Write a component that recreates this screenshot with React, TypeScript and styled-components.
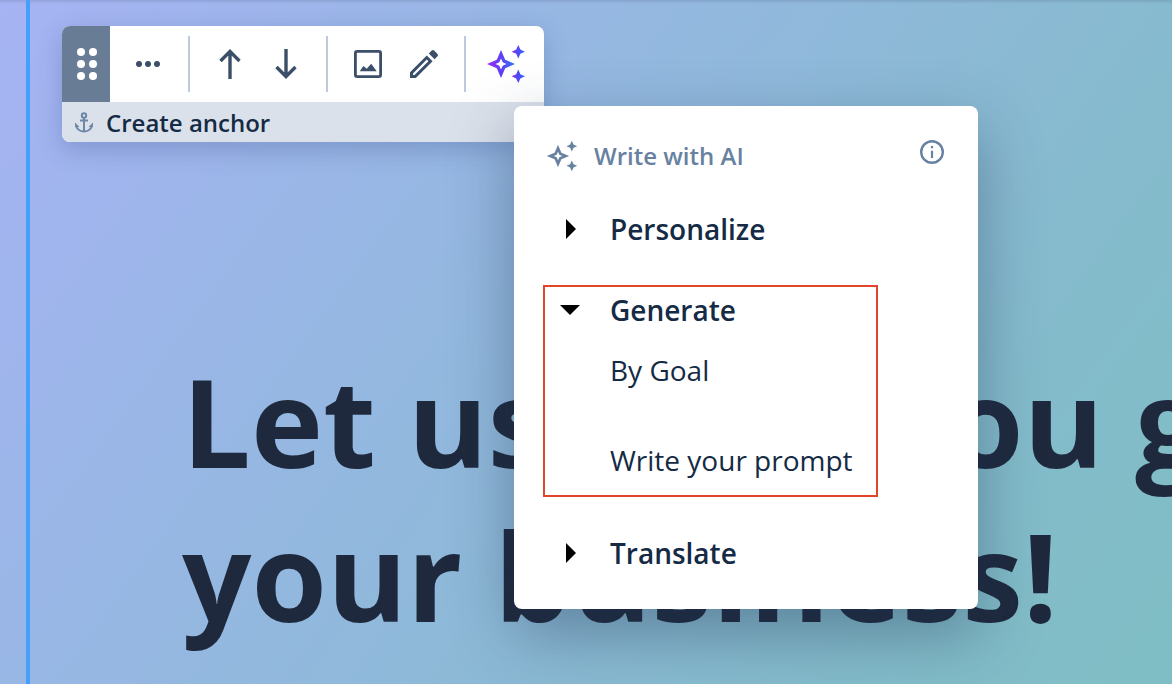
import React from "react";
import styled, { createGlobalStyle } from "styled-components";

const GlobalStyle = createGlobalStyle`
  *, *::before, *::after { box-sizing: border-box; }
  html, body, #root { margin: 0; min-height: 100vh; }
  body {
    font-family: "Open Sans", "Noto Sans", sans-serif;
    color: #152b45;
  }
  button {
    font: inherit;
    color: inherit;
    border: 0;
    padding: 0;
    background: none;
    cursor: pointer;
  }
  svg { display: block; }
`;

const Page = styled.main`
  position: relative;
  min-height: 100vh;
  overflow: hidden;
  background:
    linear-gradient(rgba(20, 30, 60, 0.12), rgba(20, 30, 60, 0)) top / 100% 4px no-repeat,
    linear-gradient(126deg, #a6b3f4 0%, #93b8df 42%, #84bbcb 78%, #7fbec4 100%);
`;

const Block = styled.section`
  min-height: 100vh;
  margin-left: 26px;
  padding: 344px 0 0 152px;
  border-left: 4px solid #45a0fb;
`;

const Title = styled.h1`
  margin: 0;
  font-size: 122px;
  line-height: 154px;
  font-weight: 700;
  color: #1e293d;
  white-space: nowrap;
`;

const Toolbar = styled.div`
  position: absolute;
  top: 26px;
  left: 62px;
  border-radius: 8px;
  background: #fff;
  box-shadow: 0 8px 24px rgba(40, 60, 120, 0.25);
`;

const Clip = styled.div`
  border-radius: 8px;
  overflow: hidden;
`;

const Tools = styled.div`
  display: flex;
  align-items: center;
  height: 76px;
`;

const Handle = styled.button`
  display: grid;
  place-items: center;
  width: 48px;
  height: 76px;
  background: #687d95;
  cursor: grab;
`;

const Group = styled.div<{ $pad?: string }>`
  display: flex;
  padding: ${(p) => p.$pad ?? "0 12px"};
  & + & { border-left: 2px solid #bccadb; }
`;

const Tool = styled.button`
  display: grid;
  place-items: center;
  width: 56px;
  height: 56px;
  color: #3b4f69;
`;

const AnchorButton = styled.button`
  display: flex;
  align-items: center;
  gap: 12px;
  width: 100%;
  height: 40px;
  padding: 2px 12px 0;
  background: #dbe1ea;
  font-size: 24px;
  line-height: 38px;
  font-weight: 600;
`;

const AnchorIcon = styled.svg`
  color: #6d87a5;
`;

const Menu = styled.div`
  position: absolute;
  top: 106px;
  left: 514px;
  display: flex;
  flex-direction: column;
  align-items: flex-start;
  gap: 31px;
  width: 464px;
  padding: 26px 29px 31px;
  border-radius: 8px;
  background: #fff;
  box-shadow: 0 24px 64px rgba(30, 50, 80, 0.4);
`;

const MenuHeader = styled.header`
  display: flex;
  align-items: center;
  gap: 16px;
  align-self: stretch;
  height: 48px;
  padding: 0 5px 0 3px;
  margin-bottom: -7px;
  color: #6881a0;
`;

const MenuTitle = styled.h2`
  flex: 1;
  margin: 0;
  font-size: 24px;
  line-height: 48px;
  font-weight: 600;
`;

const InfoButton = styled.button`
  align-self: flex-start;
  padding-top: 8px;
`;

const Section = styled.section<{ $marked?: boolean }>`
  padding: 0 23px 0 15px;
  border: 2px solid ${(p) => (p.$marked ? "#e2462a" : "transparent")};
`;

const SectionToggle = styled.button`
  display: flex;
  align-items: center;
  gap: 30px;
  height: 46px;
  font-size: 28px;
  line-height: 46px;
  font-weight: 600;
`;

const Options = styled.ul`
  display: flex;
  flex-direction: column;
  gap: 46px;
  margin: 0;
  padding: 15px 0 13px 50px;
  list-style: none;
`;

const Option = styled.button`
  display: block;
  height: 44px;
  font-size: 28px;
  line-height: 44px;
`;

const MAIN_STAR =
  "M15 6 L19.2 15.8 L29 20 L19.2 24.2 L15 34 L10.8 24.2 L1 20 L10.8 15.8 Z M15 14.6 L13.3 18.3 L9.6 20 L13.3 21.7 L15 25.4 L16.7 21.7 L20.4 20 L16.7 18.3 Z";
const SMALL_STARS =
  "M32.3 1 L34.4 5.6 L39 7.7 L34.4 9.8 L32.3 14.4 L30.2 9.8 L25.6 7.7 L30.2 5.6 Z M32.3 25.6 L34.4 30.2 L39 32.3 L34.4 34.4 L32.3 39 L30.2 34.4 L25.6 32.3 L30.2 30.2 Z";

function Sparkles({ size, colorful }: { size: number; colorful?: boolean }) {
  return (
    <svg width={size} height={size} viewBox="0 0 40 40" aria-hidden="true">
      {colorful && (
        <defs>
          <linearGradient id="spark" gradientUnits="userSpaceOnUse" x1="1" y1="20" x2="29" y2="18">
            <stop offset="0" stopColor="#a02cf0" />
            <stop offset="0.5" stopColor="#6040f5" />
            <stop offset="1" stopColor="#2f72ff" />
          </linearGradient>
          <linearGradient id="spark-small" gradientUnits="userSpaceOnUse" x1="25" y1="20" x2="39" y2="20">
            <stop offset="0" stopColor="#8a35f0" />
            <stop offset="0.5" stopColor="#5048f8" />
            <stop offset="1" stopColor="#2f72ff" />
          </linearGradient>
        </defs>
      )}
      <path fill={colorful ? "url(#spark)" : "currentColor"} fillRule="evenodd" d={MAIN_STAR} />
      <path fill={colorful ? "url(#spark-small)" : "currentColor"} d={SMALL_STARS} />
    </svg>
  );
}

function Caret({ open }: { open?: boolean }) {
  return (
    <svg width="20" height="20" viewBox="0 0 20 20" aria-hidden="true">
      <path fill="#000" d={open ? "M0 5H20L10 15Z" : "M6 0L16 10L6 20Z"} />
    </svg>
  );
}

const stroke = { fill: "none", stroke: "currentColor", strokeWidth: 3.4 };

export default function App() {
  return (
    <>
      <GlobalStyle />
      <Page>
        <Block>
          <Title>
            Let us help you grow
            <br />
            your business!
          </Title>
        </Block>

        <Toolbar role="toolbar" aria-label="Block tools">
          <Clip>
            <Tools>
              <Handle aria-label="Drag block">
                <svg width="24" height="32" viewBox="0 0 24 32" fill="#fff">
                  {[4, 16, 28].map((y) => (
                    <React.Fragment key={y}>
                      <circle cx="7" cy={y} r="4" />
                      <circle cx="19" cy={y} r="4" />
                    </React.Fragment>
                  ))}
                </svg>
              </Handle>
              <Group $pad="0 12px 0 10px">
                <Tool aria-label="More">
                  <svg width="24" height="24" viewBox="0 0 24 24" fill="currentColor">
                    <circle cx="3" cy="12" r="3" />
                    <circle cx="12" cy="12" r="3" />
                    <circle cx="21" cy="12" r="3" />
                  </svg>
                </Tool>
              </Group>
              <Group>
                <Tool aria-label="Move up">
                  <svg width="32" height="32" viewBox="0 0 32 32" {...stroke}>
                    <path d="M16 31V4M6.5 13L16 3.5L25.5 13" />
                  </svg>
                </Tool>
                <Tool aria-label="Move down">
                  <svg width="32" height="32" viewBox="0 0 32 32" {...stroke}>
                    <path d="M16 1V28M6.5 19L16 28.5L25.5 19" />
                  </svg>
                </Tool>
              </Group>
              <Group>
                <Tool aria-label="Image">
                  <svg width="32" height="32" viewBox="0 0 32 32">
                    <rect x="3.4" y="3.4" width="25.2" height="25.2" rx="1.8" {...stroke} strokeWidth={2.8} />
                    <path fill="currentColor" d="M7.7 23.2L11.5 18L14.7 20.8L19.200 15.800L24.700 23.200Z" />
                  </svg>
                </Tool>
                <Tool aria-label="Edit">
                  <svg width="32" height="32" viewBox="0 0 32 32">
                    <path
                      fill="currentColor"
                      fillRule="evenodd"
                      d="M2 24.200L18.800 7.400L24.600 13.200L7.800 30H2ZM5 25.500V27H6.500L20.400 13.200L18.800 11.600ZM20.800 5.400L23.700 2.500Q24.900 1.400 26.100 2.500L29.500 5.900Q30.600 7.100 29.500 8.300L26.600 11.200Z"
                    />
                  </svg>
                </Tool>
              </Group>
              <Group $pad="0 10px 0 12px">
                <Tool aria-label="Write with AI">
                  <Sparkles size={40} colorful />
                </Tool>
              </Group>
            </Tools>
            <AnchorButton>
              <AnchorIcon width="20" height="22" viewBox="0 0 20 22" fill="none" stroke="currentColor" strokeWidth="2" aria-hidden="true">
                <circle cx="10" cy="3.500" r="2.200" />
                <path d="M10 5.700V19.500M6 8.500H14M2 13C2.500 17 5.500 19.300 10 19.500C14.500 19.300 17.500 17 18 13" />
                <path fill="currentColor" stroke="none" d="M1 10.500L5.500 15H1ZM19 10.500L14.500 15H19Z" />
              </AnchorIcon>
              Create anchor
            </AnchorButton>
          </Clip>
        </Toolbar>

        <Menu>
          <MenuHeader>
            <Sparkles size={32} />
            <MenuTitle>Write with AI</MenuTitle>
            <InfoButton aria-label="About AI writing">
              <svg width="24" height="24" viewBox="0 0 24 24">
                <circle cx="12" cy="12" r="10.800" fill="none" stroke="currentColor" strokeWidth="2.400" />
                <path fill="currentColor" d="M10.900 6H13.100V8.200H10.900ZM10.900 10.800H13.100V18H10.900Z" />
              </svg>
            </InfoButton>
          </MenuHeader>
          <Section>
            <SectionToggle aria-expanded="false">
              <Caret />
              Personalize
            </SectionToggle>
          </Section>
          <Section $marked>
            <SectionToggle aria-expanded="true">
              <Caret open />
              Generate
            </SectionToggle>
            <Options>
              <li>
                <Option>By Goal</Option>
              </li>
              <li>
                <Option>Write your prompt</Option>
              </li>
            </Options>
          </Section>
          <Section>
            <SectionToggle aria-expanded="false">
              <Caret />
              Translate
            </SectionToggle>
          </Section>
        </Menu>
      </Page>
    </>
  );
}
